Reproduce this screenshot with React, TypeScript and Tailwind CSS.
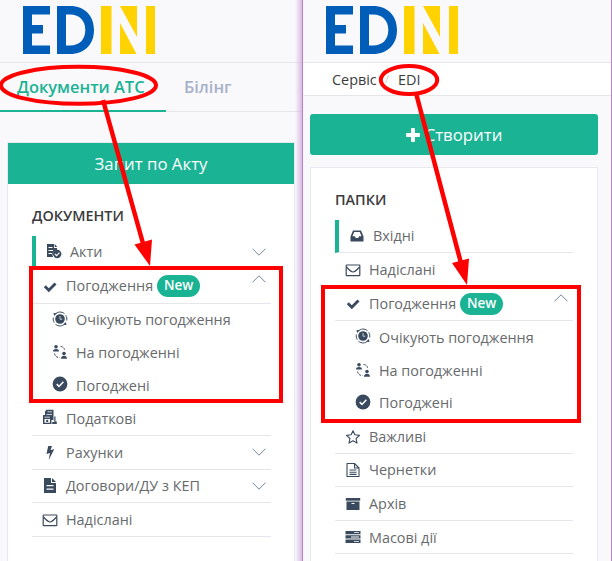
import type { ReactNode } from "react";

const ink = "#3a4a5e";

function Logo() {
  return (
    <svg width="133" height="48" viewBox="0 0 133 48" className="block">
      <path fill="#005eb8" d="M0 0H27V8.5H9V19H20V27.5H9V39.500H27V48H0Z" />
      <path fill="#005eb8" fillRule="evenodd" d="M34 0H47C62 0 71 10 71 24S62 48 47 48H34ZM43 8.500V39.500H47C57 39.500 62.300 33 62.300 24S57 8.500 47 8.500Z" />
      <path fill="#ffd200" d="M78 0H88.500V48H78ZM97 0H114V31ZM97 17 113.500 48H97ZM123 0H132V48H123Z" />
    </svg>
  );
}

function Svg({ children }: { children: ReactNode }) {
  return (
    <svg width="16" height="16" viewBox="0 0 16 16" fill={ink} className="block shrink-0">
      {children}
    </svg>
  );
}

const icons: Record<string, ReactNode> = {
  check: <Svg><path d="m1.800 8.300 2-2 3 2.900L12.500 3.400l2 2L6.800 13.200Z" /></Svg>,
  acts: (
    <Svg>
      <path fillRule="evenodd" d="M1 1H8V5H11V7A5 5 0 0 0 7 14H1ZM2.500 4V5H6.500V4ZM2.500 7V8H7V7ZM2.500 10V11H6V10ZM8.700 1 11.300 4H8.700Z" />
      <circle cx="11.200" cy="11" r="4.200" />
      <path d="m9 11 1.600 1.600 2.900-3" fill="none" stroke="#fff" strokeWidth="1.100" />
    </Svg>
  ),
  clock: (
    <Svg>
      <circle cx="8" cy="8" r="4.800" />
      <path d="M8 5V8.200H10.300" stroke="#fff" fill="none" strokeWidth=".7" />
      <path d="M3 3.500C5.500.5 9.500.3 12.500 2.700M13 12.500C10.500 15.500 6.500 15.700 3.500 13.300M1.300 6.500C1 8.500 1.300 10 2.300 11.700M14.700 9.500C15 7.500 14.700 6 13.700 4.300" fill="none" stroke={ink} strokeWidth="1" />
      <path d="M1.500 2 4.600 2.300 2.200 5ZM14.500 14 11.400 13.700 13.800 11Z" />
    </Svg>
  ),
  people: (
    <Svg>
      <circle cx="4" cy="2.700" r="1.800" />
      <path d="M1 7.500C1 5.500 2.300 4.900 4 4.900S7 5.500 7 7.500Z" />
      <circle cx="12" cy="9.500" r="1.800" />
      <path d="M9 14.700C9 12.700 10.300 11.700 12 11.700S15 12.700 15 14.700Z" />
      <path d="M8.500 2.500C11 2.500 12.500 4 12.500 6.500M2.500 9.500C3 12 4.500 13.500 7.500 13.500" fill="none" stroke={ink} strokeDasharray="2.300 1" />
    </Svg>
  ),
  approved: (
    <Svg>
      <circle cx="8" cy="8" r="7.400" />
      <path d="m4.700 8.100 2.300 2.300 4.400-4.600" stroke="#fff" fill="none" strokeWidth="1.500" />
    </Svg>
  ),
  tax: (
    <Svg>
      <path fillRule="evenodd" d="M4.500 .8H11.500V11H9.500V15H1V6H3V2.500ZM5.500 2.500V3.300H10V2.500ZM4.500 5V5.800H10V5ZM2.500 7.800V8.600H8V7.800ZM2.500 10V13.800H8V10Z" />
      <circle cx="5.200" cy="11.900" r="1.200" />
      <path d="M12.300 7.500H13.500V12.500H14.800V15H10.200V13H12.300Z" />
    </Svg>
  ),
  bolt: <Svg><path d="M6.200 1H10L8.500 5 12.200 4.200 6.700 15 8 8 4.500 9Z" /></Svg>,
  file: (
    <Svg>
      <path fillRule="evenodd" d="M2 0H9V5H14V15H2ZM4.500 7V8.200H11.500V7ZM4.500 10.500V11.700H11.500V10.500Z" />
      <path d="M10 0 14 4H10Z" />
    </Svg>
  ),
  mail: (
    <Svg>
      <rect x="1.200" y="3" width="13.600" height="10.600" rx=".6" fill="none" stroke={ink} strokeWidth="1.200" />
      <path d="M1.500 5C4 7.800 6.500 10 8 10S12 7.800 14.500 5" fill="none" stroke={ink} strokeWidth="1.200" />
    </Svg>
  ),
  inbox: (
    <Svg>
      <path fillRule="evenodd" d="M4 2.500H12L14.500 8.500V13.500H1.500V8.500ZM5.200 4 3.500 8.300H5.900L6.800 10H9.200L10.100 8.300H12.500L10.800 4Z" />
    </Svg>
  ),
  star: <Svg><path d="m8 1.700 1.900 4.100 4.600.6-3.400 3.100.9 4.600L8 11.800l-4 2.300.9-4.600-3.400-3.100 4.600-.6Z" fill="none" stroke={ink} strokeWidth="1.100" strokeLinejoin="round" /></Svg>,
  draft: (
    <Svg>
      <path d="M2 1.500H9.500L14 6V14.500H2ZM9.500 1.500V6H14M4.500 8H11.500M4.500 10.200H11.500M4.500 12.400H11.500" fill="none" stroke={ink} strokeWidth="1.100" strokeLinejoin="round" />
    </Svg>
  ),
  archive: (
    <Svg>
      <path d="M.8 2H15.200V4.700H.8Z" />
      <path fillRule="evenodd" d="M1.500 5.500H14.500V14H1.500ZM6.500 7V8H9.500V7Z" />
    </Svg>
  ),
  server: (
    <Svg>
      <path fillRule="evenodd" d="M.5 2H15.500V5.300H.5ZM9 3.300V4.100H14V3.300ZM.5 6.300H15.500V9.600H.5ZM6 7.600V8.400H14V7.600ZM.5 10.600H15.500V13.900H.5ZM9 11.900V12.700H14V11.900Z" />
    </Svg>
  ),
};

function Chevron({ up = false, className = "" }: { up?: boolean; className?: string }) {
  return (
    <svg width="14" height="8" viewBox="0 0 14 8" fill="none" stroke="#71869a" className={`ml-auto shrink-0 ${className}`}>
      <path d={up ? "M.5 7.300 7 .8 13.500 7.300" : "M.5 .7 7 7.200 13.500 .7"} />
    </svg>
  );
}

type RowProps = { icon: string; label: string; h: string; pad?: string; line?: boolean; iconShift?: string; textShift?: string; children?: ReactNode };

function Row({ icon, label, h, pad = "pl-[10px]", line = true, iconShift = "", textShift = "", children }: RowProps) {
  return (
    <li className={`flex items-center gap-2 pr-[5px] ${h} ${pad} ${line ? "border-b border-[#e5e6e9]" : ""}`}>
      <span className={`flex w-4 shrink-0 justify-center ${iconShift}`}>{icons[icon]}</span>
      <span className={`whitespace-nowrap ${textShift}`}>{label}</span>
      {children}
    </li>
  );
}

function NewBadge({ className = "" }: { className?: string }) {
  return <span className={`-ml-[4px] flex h-[22px] w-[43px] shrink-0 items-center justify-center rounded-full bg-[#1ab394] text-[13.500px] font-semibold text-white ${className}`}>New</span>;
}

function LeftPane() {
  return (
    <section className="relative flex w-[303px] shrink-0 flex-col overflow-hidden border-r border-[#bd80cf] bg-[#f9f9fc]">
      <header className="h-[63px] border-b border-[#e5e6e9] pl-[23px] pt-[6px]"><Logo /></header>
      <nav className="flex h-[49px] border-b border-[#e5e6e9] text-[16.450px] font-semibold leading-[48px]">
        <span className="h-[49px] w-[166px] shrink-0 whitespace-nowrap border-b-2 border-[#1ab394] pl-[17px] text-[#1ab394]">Документи АТС</span>
        <span className="pl-[18px] text-[#a7b1c9]">Білінг</span>
      </nav>
      <div className="ml-[7px] mt-[30px] flex w-[288px] grow flex-col border border-b-0 border-[#e7e8f0] bg-white">
        <button className="h-[41px] shrink-0 bg-[#1ab394] text-[16.800px] text-white">Запит по Акту</button>
        <h2 className="ml-6 mt-[21px] h-[31px] text-[14.400px] font-semibold leading-[22px] text-[#3b3b3d]">ДОКУМЕНТИ</h2>
        <ul className="ml-6 w-[239px] text-[14.400px] text-[#676a6c]">
          <Row icon="acts" label="Акти" h="h-[34px] border-l-4 border-l-[#1ab394]" iconShift="-translate-y-[2px]" textShift="-translate-y-px"><Chevron className="-translate-y-px" /></Row>
          <Row icon="check" label="Погодження" h="h-[34px]" textShift="-translate-y-px"><NewBadge className="-translate-y-px" /><Chevron up className="-translate-y-[8px]" /></Row>
          <Row icon="clock" label="Очікують погодження" h="h-[33px]" pad="pl-[20px]" line={false} iconShift="-translate-y-[2px]" textShift="-translate-y-px" />
          <Row icon="people" label="На погодженні" h="h-[33px]" pad="pl-[20px]" line={false} iconShift="-translate-y-[2px]" textShift="-translate-y-px" />
          <Row icon="approved" label="Погоджені" h="h-[32px]" pad="pl-[20px]" line={false} iconShift="-translate-y-[2px]" />
          <Row icon="tax" label="Податкові" h="h-[34px]" iconShift="-translate-y-[2px]" />
          <Row icon="bolt" label="Рахунки" h="h-[34px]"><Chevron className="-translate-y-px" /></Row>
          <Row icon="file" label="Договори/ДУ з КЕП" h="h-[33px]"><Chevron /></Row>
          <Row icon="mail" label="Надіслані" h="h-[34px]" />
        </ul>
      </div>
      <div className="absolute inset-y-0 right-0 w-[7px] bg-linear-to-r from-transparent to-[#ca9fd8]/70" />
    </section>
  );
}

function RightPane() {
  return (
    <section className="flex w-[309px] shrink-0 flex-col border-r border-[#bd80cf] bg-[#f9f9fc]">
      <header className="h-[63px] border-b border-[#e5e6e9] pl-[23px] pt-[6px]"><Logo /></header>
      <nav className="flex h-[33px] items-center border-b border-[#e5e6e9] bg-white pl-[29px] text-[14.400px] text-[#3b3b3d]">
        <span className="w-[53px] translate-y-px">Сервіс</span>
        <span className="w-[13px] text-[11px] text-[#cccccc]">/</span>
        <span className="translate-y-px">EDI</span>
      </nav>
      <button className="ml-[7px] mt-[18px] flex h-[41px] w-[288px] shrink-0 items-center justify-center gap-[5px] rounded-[3px] bg-[#1ab394] text-[16.800px] text-white">
        <svg width="14" height="14" viewBox="0 0 14 14" fill="#fff">
          <path d="M5 1Q5 0 6 0H8Q9 0 9 1V5H13Q14 5 14 6V8Q14 9 13 9H9V13Q9 14 8 14H6Q5 14 5 13V9H1Q0 9 0 8V6Q0 5 1 5H5Z" />
        </svg>
        Створити
      </button>
      <div className="ml-[7px] mt-[12px] flex w-[288px] grow flex-col border border-b-0 border-[#e7e8f0] bg-white">
        <h2 className="ml-6 mt-[21px] h-[31px] text-[14.400px] font-semibold leading-[22px] text-[#3b3b3d]">ПАПКИ</h2>
        <ul className="ml-6 w-[238px] text-[14.400px] text-[#676a6c]">
          <Row icon="inbox" label="Вхідні" h="h-[33px] border-l-4 border-l-[#1ab394]" />
          <Row icon="mail" label="Надіслані" h="h-[34px]" />
          <Row icon="check" label="Погодження" h="h-[34px]"><NewBadge /><Chevron up className="-translate-y-[6px]" /></Row>
          <Row icon="clock" label="Очікують погодження" h="h-[34px]" pad="pl-[20px]" line={false} iconShift="-translate-y-[2px]" />
          <Row icon="people" label="На погодженні" h="h-[33px]" pad="pl-[20px]" line={false} iconShift="-translate-y-[2px]" textShift="-translate-y-px" />
          <Row icon="approved" label="Погоджені" h="h-[32px]" pad="pl-[20px]" line={false} iconShift="-translate-y-[2px]" textShift="-translate-y-px" />
          <Row icon="star" label="Важливі" h="h-[34px]" />
          <Row icon="draft" label="Чернетки" h="h-[33px]" />
          <Row icon="archive" label="Архів" h="h-[34px]" />
          <Row icon="server" label="Масові дії" h="h-[33px]" textShift="translate-y-px" />
        </ul>
      </div>
    </section>
  );
}

export default function App() {
  return (
    <main className="relative flex h-[561px] w-[612px] overflow-hidden font-['Open_Sans',sans-serif]">
      <LeftPane />
      <RightPane />
      <svg className="pointer-events-none absolute inset-0" width="612" height="561" fill="none" stroke="#ff0000" strokeWidth="4">
        <ellipse cx="78.500" cy="85.300" rx="77.500" ry="18.500" />
        <ellipse cx="409" cy="80" rx="28.200" ry="14" />
        <path d="M103 100 144 247M416 93 461.500 265" strokeWidth="4.500" />
        <path d="M150 266 134.500 244.500 152 239.500ZM467 285 452 263 469 258.500Z" fill="#ff0000" stroke="none" />
        <rect x="31" y="268" width="250" height="133" />
        <rect x="323" y="287" width="256" height="134" />
      </svg>
    </main>
  );
}
